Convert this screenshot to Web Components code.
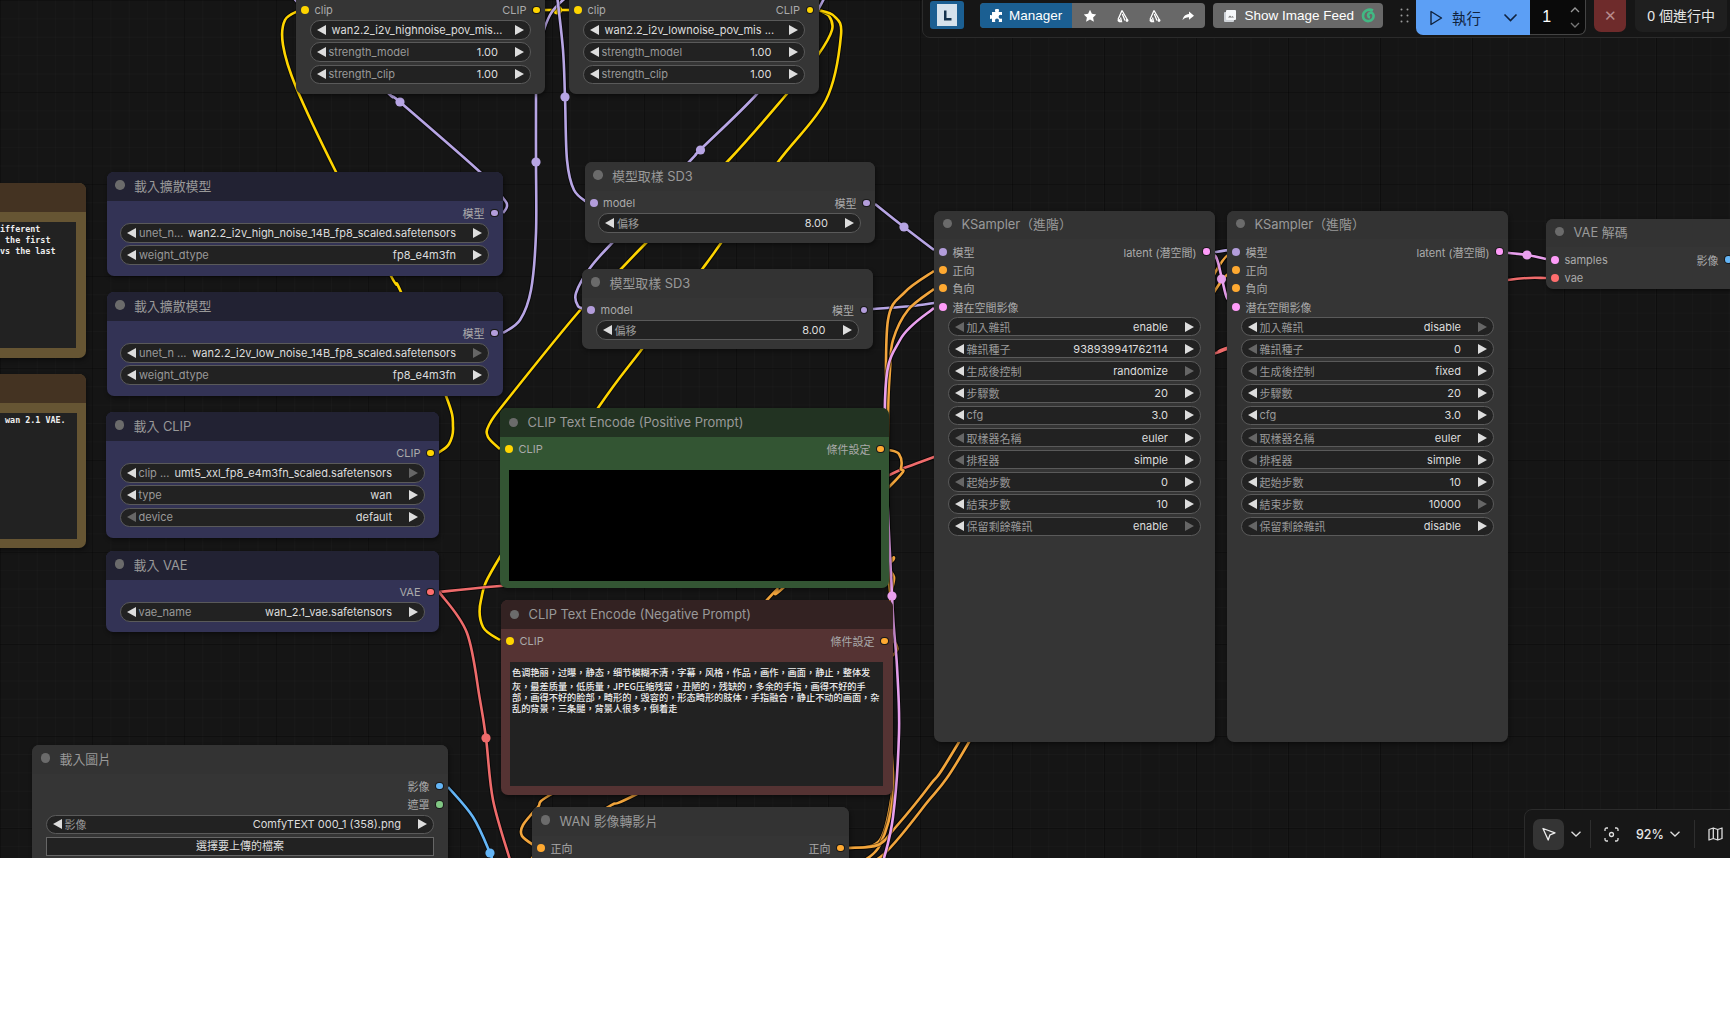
<!DOCTYPE html>
<html lang="zh-Hant">
<head>
<meta charset="utf-8">
<title>ComfyUI</title>
<style>
  html, body { margin: 0; background: #fff; }
  body { font-family: Inter, "Noto Sans CJK TC", sans-serif; }
</style>
</head>
<body>
<comfy-canvas>
  <wire-layer></wire-layer>

  <comfy-node x="-20" y="183" w="106" h="175" tone="brown">
    <text-box kind="note" style="margin:7.6px 10px 0 10px;height:126px">ifferent
 the first
vs the last</text-box>
  </comfy-node>
  <comfy-node x="-20" y="374" w="106" h="174" tone="brown">
    <text-box kind="note" style="margin:7.1px 9px 0 10px;height:126px"> wan 2.1 VAE.</text-box>
  </comfy-node>

  <comfy-node x="296" y="-31" w="249" h="125">
    <slot-row in="clip" ic="#ffd500" out="CLIP" oc="#ffd500"></slot-row>
    <node-widget value="wan2.2_i2v_highnoise_pov_mis..."></node-widget>
    <node-widget label="strength_model" value="1.00"></node-widget>
    <node-widget label="strength_clip" value="1.00"></node-widget>
  </comfy-node>
  <comfy-node x="569" y="-31" w="249.5" h="125">
    <slot-row in="clip" ic="#ffd500" out="CLIP" oc="#ffd500"></slot-row>
    <node-widget value="wan2.2_i2v_lownoise_pov_mis ..."></node-widget>
    <node-widget label="strength_model" value="1.00"></node-widget>
    <node-widget label="strength_clip" value="1.00"></node-widget>
  </comfy-node>

  <comfy-node x="106.5" y="172" w="396.5" h="104" heading="載入擴散模型" tone="blue">
    <slot-row out="模型" oc="#b39ddb"></slot-row>
    <node-widget label="unet_n..." value="wan2.2_i2v_high_noise_14B_fp8_scaled.safetensors"></node-widget>
    <node-widget label="weight_dtype" value="fp8_e4m3fn"></node-widget>
  </comfy-node>
  <comfy-node x="106.5" y="292" w="396.5" h="104" heading="載入擴散模型" tone="blue">
    <slot-row out="模型" oc="#b39ddb"></slot-row>
    <node-widget label="unet_n ..." value="wan2.2_i2v_low_noise_14B_fp8_scaled.safetensors" dim="r"></node-widget>
    <node-widget label="weight_dtype" value="fp8_e4m3fn"></node-widget>
  </comfy-node>
  <comfy-node x="106" y="412" w="333" h="126" heading="載入 CLIP" tone="blue">
    <slot-row out="CLIP" oc="#ffd500"></slot-row>
    <node-widget label="clip ..." value="umt5_xxl_fp8_e4m3fn_scaled.safetensors" dim="r"></node-widget>
    <node-widget label="type" value="wan"></node-widget>
    <node-widget label="device" value="default" dim="l"></node-widget>
  </comfy-node>
  <comfy-node x="106" y="551" w="333" h="81" heading="載入 VAE" tone="blue">
    <slot-row out="VAE" oc="#ff6e6e"></slot-row>
    <node-widget label="vae_name" value="wan_2.1_vae.safetensors"></node-widget>
  </comfy-node>
  <comfy-node x="32" y="745" w="416" h="160" heading="載入圖片">
    <slot-row out="影像" oc="#64b5f6"></slot-row>
    <slot-row out="遮罩" oc="#81c784"></slot-row>
    <node-widget label="影像" value="ComfyTEXT 000_1 (358).png"></node-widget>
    <file-button>選擇要上傳的檔案</file-button>
  </comfy-node>

  <comfy-node x="584.5" y="162" w="290.5" h="81" heading="模型取樣 SD3">
    <slot-row in="model" ic="#b39ddb" out="模型" oc="#b39ddb"></slot-row>
    <node-widget label="偏移" value="8.00"></node-widget>
  </comfy-node>
  <comfy-node x="582" y="269" w="290.5" h="80" heading="模型取樣 SD3">
    <slot-row in="model" ic="#b39ddb" out="模型" oc="#b39ddb"></slot-row>
    <node-widget label="偏移" value="8.00"></node-widget>
  </comfy-node>

  <comfy-node x="500" y="408" w="389" h="180" heading="CLIP Text Encode (Positive Prompt)" tone="green">
    <slot-row in="CLIP" ic="#ffd500" out="條件設定" oc="#ffa931"></slot-row>
    <text-box style="margin:12px 8px 0 9px;height:111px;background:#000"></text-box>
  </comfy-node>
  <comfy-node x="501" y="600" w="392" h="195" heading="CLIP Text Encode (Negative Prompt)" tone="red">
    <slot-row in="CLIP" ic="#ffd500" out="條件設定" oc="#ffa931"></slot-row>
    <text-box kind="prompt" style="margin:12px 10px 0 9px;height:124px"><div style="margin-bottom:3px">色调艳丽，过曝，静态，细节模糊不清，字幕，风格，作品，画作，画面，静止，整体发</div><div>灰，最差质量，低质量，JPEG压缩残留，丑陋的，残缺的，多余的手指，画得不好的手</div><div>部，画得不好的脸部，畸形的，毁容的，形态畸形的肢体，手指融合，静止不动的画面，杂</div><div>乱的背景，三条腿，背景人很多，倒着走</div></text-box>
  </comfy-node>
  <comfy-node x="532" y="807" w="317" h="120" heading="WAN 影像轉影片">
    <slot-row in="正向" ic="#ffa931" out="正向" oc="#ffa931"></slot-row>
  </comfy-node>

  <comfy-node x="934" y="210.5" w="281" h="531.5" heading="KSampler（進階）">
    <slot-row in="模型" ic="#b39ddb" out="latent (潜空間)" oc="#ff9cf9"></slot-row>
    <slot-row in="正向" ic="#ffa931"></slot-row>
    <slot-row in="負向" ic="#ffa931"></slot-row>
    <slot-row in="潜在空間影像" ic="#ff9cf9"></slot-row>
    <node-widget label="加入雜訊" value="enable" dim="l"></node-widget>
    <node-widget label="雜訊種子" value="938939941762114"></node-widget>
    <node-widget label="生成後控制" value="randomize" dim="r"></node-widget>
    <node-widget label="步驟數" value="20"></node-widget>
    <node-widget label="cfg" value="3.0"></node-widget>
    <node-widget label="取樣器名稱" value="euler" dim="l"></node-widget>
    <node-widget label="排程器" value="simple" dim="l"></node-widget>
    <node-widget label="起始步數" value="0" dim="l"></node-widget>
    <node-widget label="結束步數" value="10"></node-widget>
    <node-widget label="保留剩餘雜訊" value="enable" dim="r"></node-widget>
  </comfy-node>
  <comfy-node x="1227" y="210.5" w="281" h="531.5" heading="KSampler（進階）">
    <slot-row in="模型" ic="#b39ddb" out="latent (潜空間)" oc="#ff9cf9"></slot-row>
    <slot-row in="正向" ic="#ffa931"></slot-row>
    <slot-row in="負向" ic="#ffa931"></slot-row>
    <slot-row in="潜在空間影像" ic="#ff9cf9"></slot-row>
    <node-widget label="加入雜訊" value="disable" dim="r"></node-widget>
    <node-widget label="雜訊種子" value="0" dim="l"></node-widget>
    <node-widget label="生成後控制" value="fixed" dim="l"></node-widget>
    <node-widget label="步驟數" value="20"></node-widget>
    <node-widget label="cfg" value="3.0"></node-widget>
    <node-widget label="取樣器名稱" value="euler" dim="l"></node-widget>
    <node-widget label="排程器" value="simple" dim="l"></node-widget>
    <node-widget label="起始步數" value="10"></node-widget>
    <node-widget label="結束步數" value="10000" dim="r"></node-widget>
    <node-widget label="保留剩餘雜訊" value="disable" dim="l"></node-widget>
  </comfy-node>

  <comfy-node x="1546" y="218.5" w="191" h="70" heading="VAE 解碼">
    <slot-row in="samples" ic="#ff9cf9" out="影像" oc="#64b5f6"></slot-row>
    <slot-row in="vae" ic="#ff6e6e"></slot-row>
  </comfy-node>

  <top-bar></top-bar>
  <canvas-tools></canvas-tools>
</comfy-canvas>

<script>
const tones = {
  gray: ['#333', '#353535', 2.4],
  blue: ['#223', '#335', 2.4],
  green: ['#232', '#353', 0],
  red: ['#322', '#533', 0],
  brown: ['#432', '#653', 2.4]
};

class ComfyCanvas extends HTMLElement {
  constructor() {
    super();
    this.attachShadow({ mode: 'open' });
    this.shadowRoot.innerHTML = `
      <style>
        :host {
          display: block;
          position: relative;
          height: 858px;
          overflow: hidden;
          color: #ddd;
          background-color: #151515;
          background-image:
            linear-gradient(rgba(0,0,0,.35) 1px, transparent 1px),
            linear-gradient(90deg, rgba(0,0,0,.35) 1px, transparent 1px),
            linear-gradient(rgba(255,255,255,.016) 1px, transparent 1px),
            linear-gradient(90deg, rgba(255,255,255,.016) 1px, transparent 1px);
          background-size: 92px 92px, 92px 92px, 18.4px 18.4px, 18.4px 18.4px;
        }
      </style>
      <slot></slot>`;
  }
}

// wires are drawn through their points with a catmull-rom spline
function spline(pts) {
  let d = `M${pts[0][0]} ${pts[0][1]}`;
  for (let i = 0; i < pts.length - 1; i++) {
    const p0 = pts[i - 1] || pts[i];
    const p1 = pts[i];
    const p2 = pts[i + 1];
    const p3 = pts[i + 2] || p2;
    const c1 = [p1[0] + (p2[0] - p0[0]) / 6, p1[1] + (p2[1] - p0[1]) / 6];
    const c2 = [p2[0] - (p3[0] - p1[0]) / 6, p2[1] - (p3[1] - p1[1]) / 6];
    d += ` C${c1[0].toFixed(1)} ${c1[1].toFixed(1)} ${c2[0].toFixed(1)} ${c2[1].toFixed(1)} ${p2[0]} ${p2[1]}`;
  }
  return d;
}

const wires = [
  // clip
  { c: '#ffd500', p: [[438,453],[449,444],[453,427],[446,396],[401,292],[391,276],[336,172],[296,87],[283,45],[285,20],[300,10]] },
  { c: '#ffd500', p: [[818,10],[829,16],[832,30],[818,55],[786,95],[727,162],[646,243],[622,268],[582,308],[507,400],[489,425],[488,437],[500,449]] },
  { c: '#ffd500', p: [[818,10],[834,16],[841,35],[826,100],[778,162],[721,243],[703,268],[642,349],[598,408],[500,557],[481,600],[483,627],[500,640]] },
  { c: '#ffd500', p: [[545,10],[569,10]], dots: [[557.6,10]] },
  // model
  { c: '#b7a5e4', p: [[503,213],[507,206],[503,198],[480,172],[400,102],[385,90],[300,5],[290,-10]], dots: [[400,102]] },
  { c: '#b7a5e4', p: [[503,333],[520,320],[531,290],[536,233],[536,162],[536,95],[537,60],[550,15],[575,-10]], dots: [[536,162]] },
  { c: '#b7a5e4', p: [[557,-5],[563,50],[565,97],[567,160],[574,190],[588,203]], dots: [[565,97]] },
  { c: '#b7a5e4', p: [[826,-5],[800,40],[756,95],[700,150],[689,162],[612,243],[590,268],[576,293],[578,306],[586,309]], dots: [[700.5,150]] },
  { c: '#b7a5e4', p: [[875,204],[904,227],[934,250]], dots: [[904,227]] },
  { c: '#b7a5e4', p: [[873,309],[900,307],[934,303],[1080,280],[1216,252],[1235,252]] },
  // vae
  { c: '#ee6b6b', p: [[439,592],[500,586],[700,570],[860,490],[900,470],[934,457],[1216,353],[1227,349],[1400,300],[1508,280],[1546,278]] },
  { c: '#ee6b6b', p: [[439,592],[467,633],[480,700],[486,738],[493,800],[510,860]], dots: [[486,738]] },
  // image
  { c: '#64b5f6', p: [[448,787],[473,817],[490,853],[495,870]], dots: [[490,853]] },
  // conditioning
  { c: '#f2a53c', p: [[889,450],[899,454],[901,468],[892,484],[783,588],[767,600],[635,750],[550,795],[538,807],[523,825],[522,836],[535,846]] },
  { c: '#f2a53c', p: [[893,641],[896,644],[897,650],[892,656],[880,663],[800,710],[635,795],[608,807],[540,850],[528,870]] },
  { c: '#f2a53c', p: [[849,848],[880,840],[893,787],[891,760],[891,610],[892,590],[894,577],[888,566],[894,558],[888,545],[886,420],[886,408],[888,320],[905,292],[934,271]] },
  { c: '#f2a53c', p: [[862,862],[880,845],[893,797],[891,733],[891,610],[888,560],[888,420],[890,370],[893,340],[908,310],[934,289]] },
  { c: '#f2a53c', p: [[849,848],[878,845],[895,828],[930,785],[959,742],[1100,500],[1216,271],[1235,271]] },
  { c: '#f2a53c', p: [[862,862],[883,855],[925,805],[969,742],[1100,500],[1216,289],[1235,289]] },
  // latent
  { c: '#e9a0ee', p: [[883,862],[893,817],[899,733],[897,667],[892,596],[885,400],[900,340],[934,308]], dots: [[892,596]] },
  { c: '#e9a0ee', p: [[1207,252],[1216,257],[1222,279],[1227,298],[1235,307]], dots: [[1221.5,279]] },
  { c: '#e9a0ee', p: [[1499,252],[1527,255],[1546,259]], dots: [[1527,255]] }
];

class WireLayer extends HTMLElement {
  constructor() {
    super();
    this.attachShadow({ mode: 'open' });
    const paths = wires.map(w => {
      const d = spline(w.p);
      const dots = (w.dots || []).map(([x, y]) => `<circle cx="${x}" cy="${y}" r="4.6" fill="${w.c}"/>`).join('');
      return `<path d="${d}" fill="none" stroke="rgba(0,0,0,.55)" stroke-width="4.6"/>
        <path d="${d}" fill="none" stroke="${w.c}" stroke-width="2.6"/>${dots}`;
    }).join('');
    this.shadowRoot.innerHTML = `
      <style>
        :host { position: absolute; inset: 0; }
        svg { display: block; }
      </style>
      <svg width="1730" height="858" viewBox="0 0 1730 858">${paths}</svg>`;
  }
}

class ComfyNode extends HTMLElement {
  constructor() {
    super();
    this.attachShadow({ mode: 'open' });
  }

  connectedCallback() {
    const [head, body, lift] = tones[this.getAttribute('tone') || 'gray'];
    const heading = this.getAttribute('heading') || '';
    this.shadowRoot.innerHTML = `
      <style>
        :host {
          position: absolute;
          left: ${this.getAttribute('x')}px;
          top: ${this.getAttribute('y')}px;
          width: ${this.getAttribute('w')}px;
          height: ${this.getAttribute('h')}px;
          background: ${body};
          border-radius: 7px;
          box-shadow: 1px 2px 4px rgba(0,0,0,.45);
          font: 11px Inter, "Noto Sans CJK TC", sans-serif;
          overflow: hidden;
        }
        header {
          display: flex;
          align-items: center;
          gap: 9.5px;
          height: 28.5px;
          box-sizing: border-box;
          padding: 0 0 ${lift}px 8.5px;
          background: ${head};
          color: #999;
          font-size: 12.9px;
          white-space: nowrap;
        }
        header i { width: 9.5px; height: 9.5px; border-radius: 50%; background: #6b6b6b; }
        main { padding-top: 3.4px; }
      </style>
      <header><i></i><span>${heading}</span></header>
      <main><slot></slot></main>`;
  }
}

class SlotRow extends HTMLElement {
  constructor() {
    super();
    this.attachShadow({ mode: 'open' });
  }

  connectedCallback() {
    const name = this.getAttribute('in');
    const out = this.getAttribute('out');
    const left = name ? `<i class="in" style="background:${this.getAttribute('ic')}"></i><span class="l">${name}</span>` : '';
    const right = out ? `<span class="r">${out}</span><i class="out" style="background:${this.getAttribute('oc')}"></i>` : '';
    this.shadowRoot.innerHTML = `
      <style>
        :host {
          display: flex;
          align-items: center;
          height: 18.4px;
          padding: 0 5.5px 0 5px;
          color: #aaa;
          white-space: nowrap;
        }
        .in { width: 8px; height: 8px; border-radius: 50%; flex: none; }
        .out { width: 6.5px; height: 6.5px; border-radius: 50%; flex: none; box-shadow: 0 0 0 1px #1a1a1a; }
        .l { margin-left: 5.5px; }
        .r { margin-left: auto; margin-right: 6.5px; }
      </style>
      ${left}${right}`;
  }
}

class NodeWidget extends HTMLElement {
  constructor() {
    super();
    this.attachShadow({ mode: 'open' });
  }

  connectedCallback() {
    const dim = this.getAttribute('dim') || '';
    this.shadowRoot.innerHTML = `
      <style>
        :host {
          display: block;
          height: 19.3px;
          box-sizing: border-box;
          margin: 2.9px 14px 0 13.5px;
          background: #222;
          border: 1px solid #5a5a5a;
          border-radius: 10px;
          white-space: nowrap;
        }
        :host(:first-of-type) { margin-top: 1px; }
        div {
          display: flex;
          align-items: center;
          height: 100%;
          padding: 0 6px 0 6px;
        }
        svg { flex: none; width: 9px; height: 10px; fill: #ddd; }
        svg.dim { fill: #666; }
        .label { margin-left: 3px; color: #999; }
        .value { margin-left: auto; margin-right: 17px; color: #ddd; }
        .label:empty + .value { margin-left: 3px; margin-right: auto; }
      </style>
      <div>
        <svg viewBox="0 0 9 10" class="${dim === 'l' ? 'dim' : ''}"><path d="M9 0V10L0 5Z"/></svg>
        <span class="label">${this.getAttribute('label') || ''}</span>
        <span class="value">${this.getAttribute('value')}</span>
        <svg viewBox="0 0 9 10" class="${dim === 'r' ? 'dim' : ''}"><path d="M0 0V10L9 5Z"/></svg>
      </div>`;
  }
}

class FileButton extends HTMLElement {
  constructor() {
    super();
    this.attachShadow({ mode: 'open' });
    this.shadowRoot.innerHTML = `
      <style>
        :host {
          display: block;
          height: 19px;
          box-sizing: border-box;
          margin: 3.4px 14px 0 14px;
          background: #222;
          border: 1px solid #666;
          text-align: center;
          line-height: 17px;
          color: #ddd;
        }
      </style>
      <slot></slot>`;
  }
}

class TextBox extends HTMLElement {
  constructor() {
    super();
    this.attachShadow({ mode: 'open' });
  }

  connectedCallback() {
    const kind = this.getAttribute('kind');
    const font = kind === 'note'
      ? 'bold 8.4px/11px "DejaVu Sans Mono", monospace'
      : '500 9.2px/11px "Noto Sans CJK SC", sans-serif';
    const pad = { note: '2px 0 0 10px', prompt: '4.5px 0 0 2px' }[kind] || '0';
    this.shadowRoot.innerHTML = `
      <style>
        :host {
          display: block;
          background: #222;
          color: #eee;
          font: ${font};
          padding: ${pad};
          box-sizing: border-box;
          overflow: hidden;
        }
        div { white-space: ${kind === 'note' ? 'pre' : 'nowrap'}; }
      </style>
      <div><slot></slot></div>`;
  }
}

class TopBar extends HTMLElement {
  constructor() {
    super();
    this.attachShadow({ mode: 'open' });
    this.shadowRoot.innerHTML = `
      <style>
        :host {
          position: absolute;
          top: -1px;
          right: -1px;
          display: flex;
          align-items: flex-start;
          box-sizing: border-box;
          width: 809px;
          height: 39px;
          padding: 0 3px 0 7px;
          background: #161616;
          border: 1px solid #2b2b2b;
          border-radius: 0 0 0 8px;
          font: 13px "Liberation Sans", "Noto Sans CJK TC", sans-serif;
          color: #fff;
        }
        svg { display: block; flex: none; }
        .logo {
          width: 34px; height: 28px; margin-top: 1px; border-radius: 3px;
          background: #1b5f92; display: flex; align-items: center; justify-content: center;
        }
        .group, .feed {
          display: flex; align-items: center; height: 25px; margin-top: 3px;
          background: #686868; border-radius: 4px; overflow: hidden;
        }
        .group { width: 226px; margin-left: 16px; }
        .manager {
          display: flex; align-items: center; gap: 5px; width: 92px; height: 100%;
          box-sizing: border-box; padding-left: 10px; background: #1b5f92; font-size: 13.5px;
        }
        .tools { display: flex; flex: 1; justify-content: space-around; padding: 0 1px 0 2px; }
        .feed { width: 170px; margin-left: 8px; gap: 7px; padding-left: 10px; box-sizing: border-box; font-size: 13.5px; }
        .grip { margin: 8px 0 0 17px; }
        .run {
          display: flex; align-items: center; width: 114.5px; height: 35px; margin-left: 7px;
          background: #5c9ff5; color: #10223d; font-size: 14.5px;
          box-sizing: border-box; padding-left: 13px; border-radius: 0 0 0 7px;
        }
        .run span { margin-left: 9px; }
        .run svg:last-child { margin-left: 22px; }
        .count {
          display: flex; align-items: center; width: 56px; height: 35px;
          box-sizing: border-box; padding-left: 12px; background: #0a0a0a; font-size: 16px;
          border-right: 1px solid #444; border-bottom: 1px solid #444; border-radius: 0 0 7px 0;
        }
        .arrows { display: flex; flex-direction: column; gap: 9px; margin-left: 19px; }
        .cancel {
          width: 32px; height: 32px; margin-left: 8px; border-radius: 0 0 7px 7px;
          background: #6e2b2b; color: #b78b8b; text-align: center; line-height: 32px; font-size: 15px;
        }
        .queue {
          width: 92px; height: 32px; margin-left: 9px; border-radius: 0 0 7px 7px;
          background: #1f1f1f; text-align: center; line-height: 32px; font-size: 14px; color: #e8e8e8;
        }
      </style>
      <div class="logo">
        <svg width="20" height="22" viewBox="0 0 20 22"><rect width="20" height="22" fill="#d5e2ec"/><path d="M7 6.500h2.500v7.500H14.500v2.500H7z" fill="#14324d"/></svg>
      </div>
      <div class="group">
        <div class="manager">
          <svg width="14" height="14" viewBox="0 0 14 14" fill="#fff"><path d="M5 1.500a2 2 0 0 1 4 0c0 .6-.3.9-.3 1.400H12v3.200c-.5 0-.9-.3-1.400-.3a2 2 0 0 0 0 4c.5 0 .9-.3 1.400-.3V13H8.700c0-.5.3-.9.300-1.400a2 2 0 0 0-4 0c0 .5.300.9.300 1.400H2V9.600c-.5 0-.8.300-1.100.3a2 2 0 0 1 0-4c.3 0 .6.300 1.100.3V2.900h3.300C5.300 2.400 5 2.100 5 1.500z"/></svg>
          <span>Manager</span>
        </div>
        <div class="tools">
          <svg width="14" height="14" viewBox="0 0 14 14" fill="#fff"><path d="M7 .8l1.900 4 4.300.6-3.100 3 .8 4.300L7 10.600l-3.900 2.100.8-4.300-3.100-3 4.300-.6z"/></svg>
          <svg width="14" height="14" viewBox="0 0 14 14" fill="none" stroke="#fff" stroke-width="1.300"><path d="M6 1.500L2 10.500M6 1.500L11.800 11.500M6.300 5L9 11.500M4.500 8.500L5.500 12.500H3"/><circle cx="3" cy="11.500" r="1.400" fill="#fff" stroke="none"/><circle cx="11" cy="11.500" r="1.400" fill="#fff" stroke="none"/></svg>
          <svg width="14" height="14" viewBox="0 0 14 14" fill="none" stroke="#fff" stroke-width="1.300"><path d="M6 1.500L2 10.500M6 1.500L11.800 11.500M6.300 5L9 11.500M4.500 8.500L5.500 12.500H3"/><circle cx="3" cy="11.500" r="1.400" fill="#fff" stroke="none"/><circle cx="11" cy="11.500" r="1.400" fill="#fff" stroke="none"/></svg>
          <svg width="14" height="14" viewBox="0 0 14 14" fill="#fff"><path d="M8 2.500L13 6.800 8 10.800V8.300c-3 0-4.800.8-6.500 3C2 8 4 5.200 8 4.900z"/></svg>
        </div>
      </div>
      <div class="feed">
        <svg width="14" height="14" viewBox="0 0 14 14"><rect x="1" y="3" width="10" height="10" rx="1" fill="#cfd3d8"/><rect x="3" y="1" width="10" height="10" rx="1" fill="#f4f6f8"/><path d="M5 8.500l2-2 1.500 1.500 1-1 1.500 1.500z" fill="#777"/></svg>
        <span>Show Image Feed</span>
        <svg width="15" height="15" viewBox="0 0 15 15" fill="none" stroke="#41b883" stroke-width="2.600"><path d="M12 2.500C8 .5 2 2.500 2 8c0 3.500 3 5.500 6 5 3-.4 5-3 4.500-6C12 5 10 4 8.500 5c-2 1-2 4 .5 4.500"/></svg>
      </div>
      <svg class="grip" width="9" height="15" viewBox="0 0 9 15" fill="#9a9a9a"><circle cx="1.500" cy="1.500" r="1"/><circle cx="7.500" cy="1.500" r="1"/><circle cx="1.500" cy="7.500" r="1"/><circle cx="7.500" cy="7.500" r="1"/><circle cx="1.500" cy="13.500" r="1"/><circle cx="7.500" cy="13.500" r="1"/></svg>
      <div class="run">
        <svg width="14" height="16" viewBox="0 0 14 16" fill="none" stroke="#10223d" stroke-width="1.400"><path d="M2 1.500v13L12.500 8z" stroke-linejoin="round"/></svg>
        <span>執行</span>
        <svg width="15" height="9" viewBox="0 0 15 9" fill="none" stroke="#10223d" stroke-width="1.600"><path d="M1.500 1.500L7.500 7.500 13.500 1.500"/></svg>
      </div>
      <div class="count">
        <span>1</span>
        <div class="arrows">
          <svg width="10" height="6" viewBox="0 0 10 6" fill="none" stroke="#999" stroke-width="1.300"><path d="M1 5l4-4 4 4"/></svg>
          <svg width="10" height="6" viewBox="0 0 10 6" fill="none" stroke="#777" stroke-width="1.300"><path d="M1 1l4 4 4-4"/></svg>
        </div>
      </div>
      <div class="cancel">✕</div>
      <div class="queue">0 個進行中</div>`;
  }
}

class CanvasTools extends HTMLElement {
  constructor() {
    super();
    this.attachShadow({ mode: 'open' });
    this.shadowRoot.innerHTML = `
      <style>
        :host {
          position: absolute;
          top: 809px;
          right: -4px;
          display: flex;
          align-items: center;
          box-sizing: border-box;
          width: 210px;
          height: 50px;
          padding-left: 8px;
          background: #171717;
          border: 1px solid #2b2b2b;
          border-radius: 8px 0 0 0;
          font: 500 12.5px Inter, sans-serif;
          color: #e6e6e6;
        }
        svg { display: block; flex: none; }
        .pick { display: flex; align-items: center; justify-content: center; width: 31px; height: 31px; border-radius: 7px; background: #343434; }
        .sep { width: 1px; height: 28px; background: #2e2e2e; }
      </style>
      <div class="pick">
        <svg width="16" height="16" viewBox="0 0 16 16" fill="none" stroke="#eee" stroke-width="1.300" stroke-linejoin="round"><path d="M2 2.500l12 4.300-5 2-1.800 5.200z"/></svg>
      </div>
      <svg style="margin-left:7px" width="10" height="6" viewBox="0 0 10 6" fill="none" stroke="#ddd" stroke-width="1.300"><path d="M.5.800L5 5 9.500.8"/></svg>
      <div class="sep" style="margin-left:9px"></div>
      <svg style="margin-left:13px" width="15" height="15" viewBox="0 0 15 15" fill="none" stroke="#ddd" stroke-width="1.300"><path d="M1 4V2.500A1.500 1.500 0 0 1 2.500 1H4M11 1h1.500A1.500 1.500 0 0 1 14 2.500V4M14 11v1.500a1.500 1.500 0 0 1-1.500 1.500H11M4 14H2.500A1.500 1.500 0 0 1 1 12.500V11"/><circle cx="7.500" cy="7.500" r="2"/></svg>
      <span style="margin-left:17px">92%</span>
      <svg style="margin-left:6px" width="10" height="6" viewBox="0 0 10 6" fill="none" stroke="#ddd" stroke-width="1.300"><path d="M.5.800L5 5 9.500.8"/></svg>
      <div class="sep" style="margin-left:14px"></div>
      <svg style="margin-left:13px" width="15" height="14" viewBox="0 0 15 14" fill="none" stroke="#ddd" stroke-width="1.300" stroke-linejoin="round"><path d="M1 2.500l4.300-1.500 4.400 1.500L14 1v10.500L9.700 13 5.300 11.500 1 13zM5.300 1v10.500M9.700 2.500V13"/></svg>`;
  }
}

customElements.define('comfy-canvas', ComfyCanvas);
customElements.define('wire-layer', WireLayer);
customElements.define('comfy-node', ComfyNode);
customElements.define('slot-row', SlotRow);
customElements.define('node-widget', NodeWidget);
customElements.define('file-button', FileButton);
customElements.define('text-box', TextBox);
customElements.define('top-bar', TopBar);
customElements.define('canvas-tools', CanvasTools);
</script>
</body>
</html>
